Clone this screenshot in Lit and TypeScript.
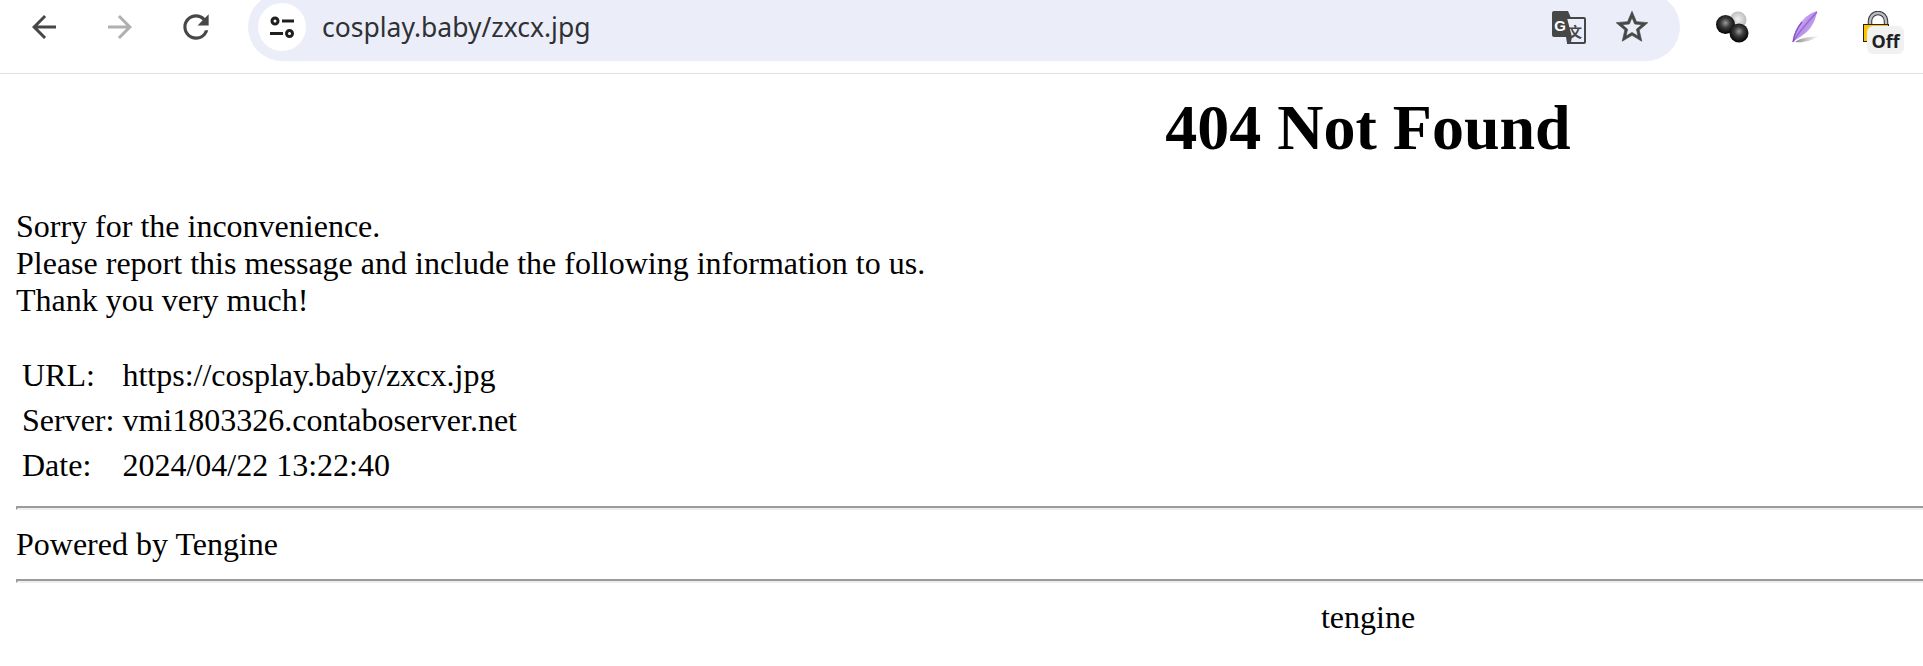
import { LitElement, html, css } from 'lit';
import { customElement } from 'lit/decorators.js';

@customElement('browser-toolbar')
class BrowserToolbar extends LitElement {
  static styles = css`
    :host {
      display: flex;
      align-items: flex-start;
      height: 73px;
      border-bottom: 1px solid #e0e0e0;
      box-sizing: content-box;
      background: #fff;
      overflow: hidden;
    }
    svg { display: block; flex: none; }
    .nav {
      display: flex;
      width: 248px;
      height: 54px;
      padding-left: 6px;
      box-sizing: border-box;
      flex: none;
    }
    .btn {
      width: 76px;
      display: flex;
      align-items: center;
      justify-content: center;
    }
    .omnibox {
      flex: none;
      width: 1432px;
      height: 68px;
      margin-top: -7px;
      background: #ebeef8;
      border-radius: 34px;
      display: flex;
      align-items: center;
      padding: 0 29px 0 10px;
      box-sizing: border-box;
    }
    .tune {
      width: 48px;
      height: 48px;
      border-radius: 50%;
      background: #fff;
      display: flex;
      align-items: center;
      justify-content: center;
      flex: none;
    }
    .url {
      margin-left: 16px;
      font: 26.5px 'Noto Sans', 'Open Sans', sans-serif;
      color: #303134;
      flex: 1;
    }
    .actions {
      display: flex;
      align-items: center;
      gap: 27px;
    }
    .ext {
      display: flex;
      align-items: flex-start;
      flex: none;
      margin-left: 36px;
      padding-top: 11px;
    }
    .feather { margin-left: 43px; }
    .lock {
      position: relative;
      width: 41px;
      height: 43px;
      margin-left: 44px;
    }
    .off {
      position: absolute;
      left: 4px;
      top: 15px;
      width: 37px;
      height: 28px;
      border-radius: 6px;
      background: #f1f1f1;
      font: bold 18px 'Noto Sans', 'Liberation Sans', sans-serif;
      color: #202124;
      line-height: 30px;
      text-align: center;
    }
  `;

  render() {
    return html`
      <div class="nav">
        <div class="btn">
          <svg width="36" height="36" viewBox="0 0 24 24" fill="#474747"><path d="M20 11H7.83l5.59-5.59L12 4l-8 8 8 8 1.41-1.41L7.83 13H20v-2z"/></svg>
        </div>
        <div class="btn">
          <svg width="36" height="36" viewBox="0 0 24 24" fill="#b0b0b0"><path d="M12 4l-1.41 1.41L16.17 11H4v2h12.17l-5.58 5.59L12 20l8-8z"/></svg>
        </div>
        <div class="btn">
          <svg width="38" height="38" viewBox="0 0 24 24" fill="#474747"><path d="M17.65 6.35A7.958 7.958 0 0 0 12 4c-4.42 0-7.99 3.58-7.99 8s3.57 8 7.99 8c3.73 0 6.84-2.55 7.73-6h-2.08A5.99 5.99 0 0 1 12 18c-3.31 0-6-2.69-6-6s2.69-6 6-6c1.66 0 3.14.69 4.22 1.78L13 11h7V4l-2.35 2.35z"/></svg>
        </div>
      </div>
      <div class="omnibox">
        <div class="tune">
          <svg width="26" height="26" viewBox="0 0 26 26" fill="none" stroke="#1f1f1f" stroke-width="3">
            <circle cx="6" cy="7" r="3"/>
            <path d="M13 7h12M1 19.5h13"/>
            <circle cx="20.5" cy="19.5" r="3"/>
          </svg>
        </div>
        <div class="url">cosplay.baby/zxcx.jpg</div>
        <div class="actions">
          <svg width="34" height="33" viewBox="0 0 34 33">
            <path d="M15 7h17a1 1 0 0 1 1 1v23a1 1 0 0 1-1 1H15" fill="#ebeef8" stroke="#474747" stroke-width="2"/>
            <path d="M2 0h14l3 7h-4l5 19H2a2 2 0 0 1-2-2V2a2 2 0 0 1 2-2z" fill="#474747"/>
            <path d="M14 26h6l-1 5a1 1 0 0 1-1 1h-3z" fill="#474747"/>
            <text x="8" y="20" text-anchor="middle" font-family="'Liberation Sans', sans-serif" font-weight="bold" font-size="15" fill="#fff">G</text>
            <text x="23" y="26" text-anchor="middle" font-family="'Noto Sans CJK SC', sans-serif" font-weight="bold" font-size="14" fill="#474747">文</text>
          </svg>
          <svg width="38" height="38" viewBox="0 0 24 24" fill="#474747" stroke="#474747" stroke-width="0.4"><path d="M22 9.24l-7.19-.62L12 2 9.19 8.63 2 9.24l5.46 4.73L5.82 21 12 17.27 18.18 21l-1.63-7.03L22 9.24zM12 15.4l-3.76 2.27 1-4.28-3.32-2.88 4.38-.38L12 6.1l1.71 4.04 4.38.38-3.32 2.88 1 4.28L12 15.4z"/></svg>
        </div>
      </div>
      <div class="ext">
        <svg width="33" height="33" viewBox="0 0 33 33">
          <defs>
            <radialGradient id="dark" cx="50%" cy="42%" r="55%">
              <stop offset="0" stop-color="#9a9a9a"/>
              <stop offset="0.45" stop-color="#3c3c3c"/>
              <stop offset="1" stop-color="#050505"/>
            </radialGradient>
            <radialGradient id="light" cx="50%" cy="45%" r="55%">
              <stop offset="0" stop-color="#f2f2f2"/>
              <stop offset="1" stop-color="#b4b4b4"/>
            </radialGradient>
          </defs>
          <circle cx="22" cy="9" r="8.5" fill="url(#light)"/>
          <circle cx="9.5" cy="13.5" r="9.5" fill="url(#dark)"/>
          <circle cx="23" cy="22" r="9.5" fill="url(#dark)"/>
        </svg>
        <svg class="feather" width="27" height="32" viewBox="0 0 27 32">
          <defs>
            <linearGradient id="plume" x1="0" y1="0" x2="1" y2="1">
              <stop offset="0" stop-color="#ecdff9"/>
              <stop offset="0.5" stop-color="#b68fe6"/>
              <stop offset="1" stop-color="#dcc8f4"/>
            </linearGradient>
            <linearGradient id="shade" x1="0" y1="0" x2="1" y2="0">
              <stop offset="0" stop-color="#8f8f8f"/>
              <stop offset="1" stop-color="#fff"/>
            </linearGradient>
          </defs>
          <path d="M3 31C10 26 19 26 27 25 20 30 10 32 3 31z" fill="url(#shade)"/>
          <path d="M25 0C15 3 4 12 1 31 8 25 22 21 25 0z" fill="url(#plume)"/>
          <path d="M1 31C7 20 16 11 25 1" fill="none" stroke="#9560d8" stroke-width="1.2"/>
          <path d="M1 31C2 24 5 17 10 11" fill="none" stroke="#8a4fc8" stroke-width="1.4"/>
        </svg>
        <div class="lock">
          <svg width="41" height="43" viewBox="0 0 41 43">
            <path d="M7 14V10a8 8 0 0 1 16 0v4" fill="none" stroke="#333" stroke-width="4.5"/>
            <path d="M7 14V10a8 8 0 0 1 16 0v4" fill="none" stroke="#b8bcc4" stroke-width="2.5"/>
            <rect x="0.5" y="13.5" width="25" height="17" fill="#fdc500" stroke="#222"/>
          </svg>
          <span class="off">Off</span>
        </div>
      </div>
    `;
  }
}

@customElement('app-root')
class AppRoot extends LitElement {
  static styles = css`
    :host {
      display: block;
      width: 1923px;
      height: 666px;
      overflow: hidden;
      background: #fff;
      color: #000;
      font-family: 'Liberation Serif', 'Times New Roman', serif;
      font-size: 32px;
    }
    .page {
      width: 2704px;
      margin: 0 16px;
    }
    h1 {
      margin: 17px 0 43px;
      font-size: 64px;
      text-align: center;
    }
    p { margin: 32px 0; }
    table { border-spacing: 4px; margin-top: 32px; }
    td { padding: 2px; }
    hr {
      height: 0;
      border-style: solid;
      border-width: 2px;
      border-color: #9a9a9a #eee #eee #9a9a9a;
      margin: 16px 0;
    }
    .footer { text-align: center; }
  `;

  render() {
    return html`
      <browser-toolbar></browser-toolbar>
      <div class="page">
        <h1>404 Not Found</h1>
        <p>Sorry for the inconvenience.<br />Please report this message and include the following information to us.<br />Thank you very much!</p>
        <table>
          <tr><td>URL:</td><td>https://cosplay.baby/zxcx.jpg</td></tr>
          <tr><td>Server:</td><td>vmi1803326.contaboserver.net</td></tr>
          <tr><td>Date:</td><td>2024/04/22 13:22:40</td></tr>
        </table>
        <hr />
        Powered by Tengine
        <hr />
        <div class="footer">tengine</div>
      </div>
    `;
  }
}
